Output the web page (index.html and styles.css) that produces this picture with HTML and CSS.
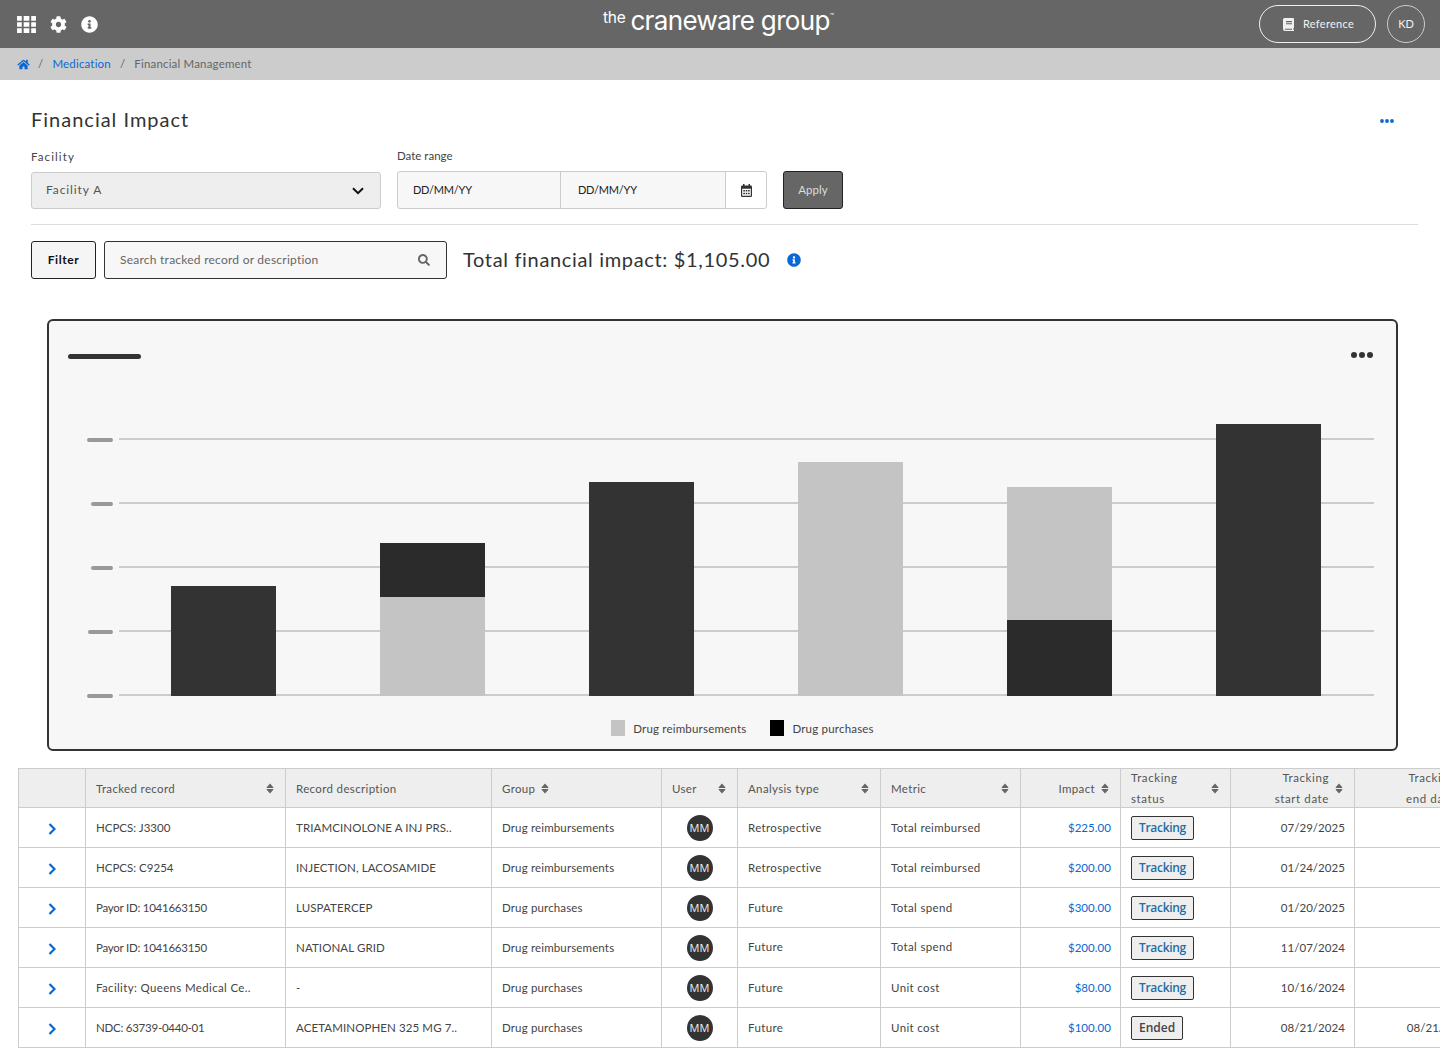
FILE: index.html
```html
<!DOCTYPE html>
<html lang="en">
<head>
<meta charset="utf-8">
<title>Financial Impact</title>
<link rel="stylesheet" href="styles.css">
</head>
<body>
<svg class="defs" width="0" height="0" aria-hidden="true">
  <symbol id="sort" viewBox="0 0 8 12"><path d="M4 0.5 7.6 4.6a.5.5 0 0 1-.4.8H.8a.5.5 0 0 1-.4-.8zM4 11.5.4 7.4a.5.5 0 0 1 .4-.8h6.4a.5.5 0 0 1 .4.8z"/></symbol>
  <symbol id="chev" viewBox="0 0 8 12"><path d="M1.5 1 6.5 6 1.5 11" fill="none" stroke="currentColor" stroke-width="2.2"/></symbol>
</svg>
<header class="topbar">
  <div class="top-left">
    <svg class="ico-apps" viewBox="0 0 20 18" aria-hidden="true"><path d="M0 0h5v5H0zM7 0h6v5H7zM15 0h5v5h-5zM0 6.500h5v5H0zM7 6.500h6v5H7zM15 6.500h5v5h-5zM0 13h5v5H0zM7 13h6v5H7zM15 13h5v5h-5z"/></svg>
    <svg class="ico-top" viewBox="0 0 512 512" aria-hidden="true"><path d="M487.400 315.700l-42.600-24.600c4.300-23.200 4.300-47 0-70.200l42.600-24.600c4.900-2.800 7.100-8.600 5.500-14-11.100-35.600-30-67.800-54.700-94.600-3.800-4.100-10-5.100-14.800-2.300L380.800 110c-17.900-15.400-38.500-27.300-60.800-35.100V25.800c0-5.600-3.900-10.500-9.400-11.700-36.700-8.200-74.300-7.800-109.200 0-5.500 1.200-9.400 6.100-9.400 11.700V75c-22.200 7.900-42.800 19.800-60.800 35.100L88.700 85.500c-4.900-2.800-11-1.900-14.800 2.300-24.700 26.700-43.600 58.900-54.700 94.600-1.700 5.400.6 11.200 5.500 14L67.300 221c-4.300 23.200-4.300 47 0 70.200l-42.600 24.600c-4.900 2.800-7.100 8.600-5.500 14 11.100 35.600 30 67.800 54.700 94.600 3.800 4.100 10 5.100 14.800 2.300l42.600-24.600c17.900 15.400 38.500 27.300 60.800 35.100v49.200c0 5.600 3.900 10.500 9.400 11.700 36.700 8.200 74.300 7.800 109.200 0 5.500-1.200 9.400-6.100 9.400-11.700v-49.200c22.200-7.900 42.800-19.800 60.800-35.100l42.600 24.600c4.900 2.800 11 1.900 14.800-2.300 24.700-26.700 43.600-58.900 54.700-94.600 1.500-5.500-.7-11.300-5.600-14.100zM256 336c-44.100 0-80-35.900-80-80s35.900-80 80-80 80 35.900 80 80-35.900 80-80 80z"/></svg>
    <svg class="ico-top" viewBox="0 0 512 512" aria-hidden="true"><path d="M256 8C119.043 8 8 119.083 8 256c0 136.997 111.043 248 248 248s248-111.003 248-248C504 119.083 392.957 8 256 8zm0 110c23.196 0 42 18.804 42 42s-18.804 42-42 42-42-18.804-42-42 18.804-42 42-42zm56 254c0 6.627-5.373 12-12 12h-88c-6.627 0-12-5.373-12-12v-24c0-6.627 5.373-12 12-12h12v-64h-12c-6.627 0-12-5.373-12-12v-24c0-6.627 5.373-12 12-12h64c6.627 0 12 5.373 12 12v100h12c6.627 0 12 5.373 12 12v24z"/></svg>
  </div>
  <div class="logo"><span class="logo-the">the</span><span class="logo-main">craneware group</span><span class="logo-tm">™</span></div>
  <div class="top-right">
    <div class="ref-btn">
      <svg class="ico-book" viewBox="0 0 11 13" aria-hidden="true"><path fill-rule="evenodd" d="M1.500 0H10a1 1 0 0 1 1 1v8.500a1 1 0 0 1-.6.800V11.500a.6.6 0 0 0 .6.600V13H2a2 2 0 0 1-2-2V1.500A1.500 1.500 0 0 1 1.500 0zM3 3v1.200h6V3zM3 5.200v1.100h6V5.200zM2 10.800a.9.900 0 0 0 0 1h7v-1z"/></svg>
      <span>Reference</span>
    </div>
    <div class="avatar-btn">KD</div>
  </div>
</header>
<nav class="crumbs">
  <svg class="ico-home" viewBox="0 0 576 512" aria-hidden="true"><path d="M280.370 148.260L96 300.110V464a16 16 0 0 0 16 16l112.060-.29a16 16 0 0 0 15.920-16V368a16 16 0 0 1 16-16h64a16 16 0 0 1 16 16v95.640a16 16 0 0 0 16 16.050L464 480a16 16 0 0 0 16-16V300L295.670 148.260a12.190 12.190 0 0 0-15.300 0zM571.600 251.470L488 182.560V44.050a12 12 0 0 0-12-12h-56a12 12 0 0 0-12 12v72.610L318.470 43a48 48 0 0 0-61 0L4.340 251.470a12 12 0 0 0-1.600 16.900l25.500 31A12 12 0 0 0 45.150 301l235.220-193.740a12.190 12.190 0 0 1 15.300 0L530.900 301a12 12 0 0 0 16.900-1.600l25.500-31a12 12 0 0 0-1.700-16.930z"/></svg>
  <span class="sep">/</span>
  <a class="crumb-link">Medication</a>
  <span class="sep">/</span>
  <span class="crumb-cur">Financial Management</span>
</nav>
<main class="content">
  <section class="head-block">
    <div class="title-row">
      <h1>Financial Impact</h1>
      <svg class="ico-more" viewBox="0 0 14 4" aria-hidden="true"><circle cx="2" cy="2" r="1.900"/><circle cx="7" cy="2" r="1.900"/><circle cx="12" cy="2" r="1.900"/></svg>
    </div>
    <div class="form-row">
      <div class="field">
        <label class="lbl">Facility</label>
        <div class="select">
          <span>Facility A</span>
          <svg class="ico-caret" viewBox="0 0 12 8" aria-hidden="true"><path d="M1 1.200 6 6.200 11 1.200" fill="none" stroke="currentColor" stroke-width="2"/></svg>
        </div>
      </div>
      <div class="field field-date">
        <label class="lbl">Date range</label>
        <div class="dates">
          <span class="date-a">DD/MM/YY</span>
          <span class="date-b">DD/MM/YY</span>
          <span class="date-ico">
            <svg class="ico-cal" viewBox="0 0 11 13" aria-hidden="true"><path fill-rule="evenodd" d="M2 0h1.500v1.500h4V0H9v1.500h.8A1.200 1.200 0 0 1 11 2.700v9.100a1.200 1.200 0 0 1-1.200 1.200H1.200A1.200 1.200 0 0 1 0 11.800V2.700a1.200 1.200 0 0 1 1.200-1.200H2zM1.200 4.800v7h8.600v-7zM2.300 6h1.600v1.400H2.300zM4.700 6h1.600v1.400H4.700zM7.100 6h1.600v1.400H7.100zM2.300 8.800h1.600v1.400H2.300zM4.700 8.800h1.600v1.400H4.700zM7.100 8.800h1.600v1.400H7.100z"/></svg>
          </span>
        </div>
      </div>
      <div class="apply">Apply</div>
    </div>
  </section>
  <section class="tools">
    <div class="filter-btn">Filter</div>
    <div class="search">
      <span>Search tracked record or description</span>
      <svg class="ico-search" viewBox="0 0 512 512" aria-hidden="true"><path d="M505 442.700L405.300 343c-4.500-4.500-10.600-7-17-7H372c27.600-35.300 44-79.700 44-128C416 93.100 322.900 0 208 0S0 93.100 0 208s93.100 208 208 208c48.300 0 92.700-16.400 128-44v16.300c0 6.400 2.500 12.500 7 17l99.700 99.700c9.400 9.400 24.600 9.400 33.900 0l28.300-28.300c9.400-9.400 9.400-24.600.1-34zM208 336c-70.700 0-128-57.200-128-128 0-70.700 57.200-128 128-128 70.700 0 128 57.200 128 128 0 70.700-57.200 128-128 128z"/></svg>
    </div>
    <div class="total">Total financial impact: $1,105.00</div>
    <svg class="ico-info" viewBox="0 0 512 512" aria-hidden="true"><path d="M256 8C119.043 8 8 119.083 8 256c0 136.997 111.043 248 248 248s248-111.003 248-248C504 119.083 392.957 8 256 8zm0 110c23.196 0 42 18.804 42 42s-18.804 42-42 42-42-18.804-42-42 18.804-42 42-42zm56 254c0 6.627-5.373 12-12 12h-88c-6.627 0-12-5.373-12-12v-24c0-6.627 5.373-12 12-12h12v-64h-12c-6.627 0-12-5.373-12-12v-24c0-6.627 5.373-12 12-12h64c6.627 0 12 5.373 12 12v100h12c6.627 0 12 5.373 12 12v24z"/></svg>
  </section>
  <section class="chart-card">
    <svg class="chart-svg" viewBox="0 0 1347 392" aria-hidden="true">
      <g class="c-grid">
        <rect x="70" y="117" width="1255" height="2"/>
        <rect x="70" y="181" width="1255" height="2"/>
        <rect x="70" y="245" width="1255" height="2"/>
        <rect x="70" y="309" width="1255" height="2"/>
        <rect x="70" y="373" width="1255" height="2"/>
      </g>
      <g class="c-tick">
        <rect x="38" y="117" width="26" height="4" rx="2"/>
        <rect x="42" y="181" width="22" height="4" rx="2"/>
        <rect x="42" y="245" width="22" height="4" rx="2"/>
        <rect x="39" y="309" width="25" height="4" rx="2"/>
        <rect x="38" y="373" width="26" height="4" rx="2"/>
      </g>
      <rect class="c-title" x="19" y="33" width="73" height="5" rx="2.500"/>
      <g class="c-title"><circle cx="1305" cy="34" r="3"/><circle cx="1313" cy="34" r="3"/><circle cx="1321" cy="34" r="3"/></g>
      <rect class="c-dark" x="122" y="265" width="105" height="110"/>
      <rect class="c-darker" x="331" y="222" width="105" height="54"/>
      <rect class="c-light" x="331" y="276" width="105" height="99"/>
      <rect class="c-dark" x="540" y="161" width="105" height="214"/>
      <rect class="c-light" x="749" y="141" width="105" height="234"/>
      <rect class="c-light" x="958" y="166" width="105" height="133"/>
      <rect class="c-darker" x="958" y="299" width="105" height="76"/>
      <rect class="c-dark" x="1167" y="103" width="105" height="272"/>
    </svg>
    <div class="legend">
      <span class="swatch swatch-light"></span><span class="leg-txt">Drug reimbursements</span>
      <span class="swatch swatch-dark"></span><span class="leg-txt">Drug purchases</span>
    </div>
  </section>
  <div class="table-wrap">
    <table class="grid">
      <colgroup>
        <col class="c1"><col class="c2"><col class="c3"><col class="c4"><col class="c5"><col class="c6"><col class="c7"><col class="c8"><col class="c9"><col class="c10"><col class="c11">
      </colgroup>
      <thead>
        <tr>
          <th></th>
          <th><div class="th-in between"><span>Tracked record</span><svg class="ico-sort"><use href="#sort"/></svg></div></th>
          <th><div class="th-in"><span>Record description</span></div></th>
          <th><div class="th-in"><span>Group</span><svg class="ico-sort"><use href="#sort"/></svg></div></th>
          <th><div class="th-in between"><span>User</span><svg class="ico-sort"><use href="#sort"/></svg></div></th>
          <th><div class="th-in between"><span>Analysis type</span><svg class="ico-sort"><use href="#sort"/></svg></div></th>
          <th><div class="th-in between"><span>Metric</span><svg class="ico-sort"><use href="#sort"/></svg></div></th>
          <th><div class="th-in right"><span>Impact</span><svg class="ico-sort"><use href="#sort"/></svg></div></th>
          <th><div class="th-in between"><span class="two">Tracking<br>status</span><svg class="ico-sort"><use href="#sort"/></svg></div></th>
          <th><div class="th-in right"><span class="two ta-r">Tracking<br>start date</span><svg class="ico-sort"><use href="#sort"/></svg></div></th>
          <th><div class="th-in right"><span class="two ta-r">Tracking<br>end date</span><svg class="ico-sort"><use href="#sort"/></svg></div></th>
        </tr>
      </thead>
      <tbody>
        <tr>
          <td class="exp"><svg class="ico-chev"><use href="#chev"/></svg></td>
          <td class="t0">HCPCS: J3300</td><td class="caps">TRIAMCINOLONE A INJ PRS..</td><td>Drug reimbursements</td>
          <td class="ctr"><span class="user">MM</span></td><td class="wide">Retrospective</td><td class="wide">Total reimbursed</td>
          <td class="num money">$225.00</td><td><span class="badge track">Tracking</span></td><td class="num">07/29/2025</td><td class="num"></td>
        </tr>
        <tr>
          <td class="exp"><svg class="ico-chev"><use href="#chev"/></svg></td>
          <td class="t0">HCPCS: C9254</td><td class="caps">INJECTION, LACOSAMIDE</td><td>Drug reimbursements</td>
          <td class="ctr"><span class="user">MM</span></td><td class="wide">Retrospective</td><td class="wide">Total reimbursed</td>
          <td class="num money">$200.00</td><td><span class="badge track">Tracking</span></td><td class="num">01/24/2025</td><td class="num"></td>
        </tr>
        <tr>
          <td class="exp"><svg class="ico-chev"><use href="#chev"/></svg></td>
          <td class="t1">Payor ID: 1041663150</td><td class="caps">LUSPATERCEP</td><td>Drug purchases</td>
          <td class="ctr"><span class="user">MM</span></td><td class="wide">Future</td><td class="wide">Total spend</td>
          <td class="num money">$300.00</td><td><span class="badge track">Tracking</span></td><td class="num">01/20/2025</td><td class="num"></td>
        </tr>
        <tr>
          <td class="exp"><svg class="ico-chev"><use href="#chev"/></svg></td>
          <td class="t1">Payor ID: 1041663150</td><td class="caps">NATIONAL GRID</td><td>Drug reimbursements</td>
          <td class="ctr"><span class="user">MM</span></td><td class="wide nudge">Future</td><td class="wide nudge">Total spend</td>
          <td class="num money">$200.00</td><td><span class="badge track">Tracking</span></td><td class="num">11/07/2024</td><td class="num"></td>
        </tr>
        <tr>
          <td class="exp"><svg class="ico-chev"><use href="#chev"/></svg></td>
          <td class="wide">Facility: Queens Medical Ce..</td><td>-</td><td>Drug purchases</td>
          <td class="ctr"><span class="user">MM</span></td><td class="wide">Future</td><td class="wide">Unit cost</td>
          <td class="num money">$80.00</td><td><span class="badge track">Tracking</span></td><td class="num">10/16/2024</td><td class="num"></td>
        </tr>
        <tr>
          <td class="exp"><svg class="ico-chev"><use href="#chev"/></svg></td>
          <td class="t1">NDC: 63739-0440-01</td><td class="caps">ACETAMINOPHEN 325 MG 7..</td><td>Drug purchases</td>
          <td class="ctr"><span class="user">MM</span></td><td class="wide">Future</td><td class="wide">Unit cost</td>
          <td class="num money">$100.00</td><td><span class="badge ended">Ended</span></td><td class="num">08/21/2024</td><td class="num">08/21/2025</td>
        </tr>
      </tbody>
    </table>
  </div>
</main>
</body>
</html>
```

FILE: styles.css
```css
* { box-sizing: border-box; }
html, body { margin: 0; padding: 0; }
body {
  width: 1440px;
  height: 1063px;
  overflow: hidden;
  background: #fff;
  color: #333;
  font-family: "Lato", "Liberation Sans", sans-serif;
  font-size: 12px;
}
.defs { display: block; height: 0; }

.topbar {
  height: 48px;
  background: #666;
  display: flex;
  align-items: center;
  justify-content: space-between;
  padding: 0 15px 0 17px;
  position: relative;
  color: #fff;
}
.top-left { display: flex; align-items: center; gap: 14px; }
.ico-apps { width: 19px; height: 17px; fill: #fff; }
.ico-top { width: 17px; height: 17px; fill: #fff; }
.logo {
  position: absolute;
  left: 603px;
  top: 5px;
  display: flex;
  align-items: flex-start;
  color: #fff;
  white-space: nowrap;
}
.logo-the { font: 400 15.500px/20px "Inter", sans-serif; letter-spacing: -0.300px; margin: 3px 5px 0 0; }
.logo-main { font: 400 26px/32px "Inter", sans-serif; letter-spacing: -0.650px; }
.logo-tm { font: 400 7px/8px "Inter", sans-serif; margin-top: 8px; }
.top-right { display: flex; align-items: center; gap: 11px; }
.ref-btn {
  width: 117px;
  height: 38px;
  border: 1.500px solid #f0f0f0;
  border-radius: 19px;
  display: flex;
  align-items: center;
  justify-content: center;
  gap: 9px;
  padding: 0 0 2px 2px;
  font-size: 11px;
  letter-spacing: 0.300px;
  color: #f2f2f2;
}
.ico-book { width: 11px; height: 13px; fill: #f0f0f0; margin-top: 2px; }
.avatar-btn {
  width: 38px;
  height: 38px;
  border: 1.500px solid #ccc;
  border-radius: 50%;
  display: flex;
  align-items: center;
  justify-content: center;
  padding-bottom: 2px;
  font-size: 11px;
  color: #f2f2f2;
}

.crumbs {
  height: 32px;
  background: #ccc;
  display: flex;
  align-items: center;
  padding: 0 0 2px 17px;
  font-size: 11.500px;
  letter-spacing: 0.180px;
}
.ico-home { width: 13px; height: 11px; fill: #0a68d4; margin: 2px 8px 0 0; }
.sep { color: #666; margin-right: 9px; }
.crumb-link { color: #0a68d4; margin-right: 9px; }
.crumb-cur { color: #666; }

.content { padding-top: 24px; }
.head-block {
  margin: 0 22px 0 31px;
  padding-bottom: 15px;
  border-bottom: 1px solid #ddd;
}
.title-row { display: flex; justify-content: space-between; align-items: center; height: 32px; padding-right: 24px; }
h1 { margin: 0 0 2px; font-size: 20px; font-weight: 400; line-height: 30px; letter-spacing: 1px; color: #333; }
.ico-more { width: 14px; height: 4px; fill: #0a68d4; margin-top: 2px; }
.form-row { display: flex; align-items: flex-end; margin-top: 13px; }
.field { display: flex; flex-direction: column; }
.lbl { font-size: 11.500px; letter-spacing: 1.100px; line-height: 14px; color: #444; margin-bottom: 8px; }
.select {
  width: 350px;
  height: 37px;
  background: #eee;
  border: 1px solid #ccc;
  border-radius: 3px;
  display: flex;
  align-items: center;
  justify-content: space-between;
  padding: 0 16px 2px 14px;
  font-size: 12px;
  letter-spacing: 0.900px;
  color: #555;
}
.ico-caret { width: 12px; height: 8px; color: #111; margin-top: 2px; }
.field-date { margin-left: 16px; }
.field-date .lbl { letter-spacing: 0; }
.dates {
  width: 370px;
  height: 38px;
  display: flex;
  border: 1px solid #ccc;
  border-radius: 3px;
  background: #f7f7f7;
  font-size: 11px;
  letter-spacing: -0.250px;
  color: #222;
}
.date-a, .date-b { display: flex; align-items: center; padding-bottom: 2px; }
.date-a { width: 163px; padding-left: 15px; border-right: 1px solid #ccc; }
.date-b { width: 165px; padding-left: 17px; border-right: 1px solid #ccc; }
.date-ico { flex: 1; display: flex; align-items: center; justify-content: center; background: #fff; border-radius: 0 3px 3px 0; }
.ico-cal { width: 11px; height: 13px; fill: #333; }
.apply {
  margin-left: 16px;
  width: 60px;
  height: 38px;
  background: #666;
  border: 1px solid #222;
  border-radius: 3px;
  display: flex;
  align-items: center;
  justify-content: center;
  padding-bottom: 2px;
  color: #ddd;
  font-size: 11.500px;
  letter-spacing: 0;
}

.tools { display: flex; align-items: center; margin: 16px 0 0 31px; }
.filter-btn {
  width: 65px;
  height: 38px;
  background: #f5f5f5;
  border: 1px solid #222;
  border-radius: 3px;
  display: flex;
  align-items: center;
  justify-content: center;
  padding-bottom: 2px;
  color: #111;
  font-size: 12px;
  font-weight: 700;
  letter-spacing: 0.600px;
}
.search {
  width: 343px;
  height: 38px;
  margin-left: 8px;
  background: #f7f7f7;
  border: 1px solid #333;
  border-radius: 3px;
  display: flex;
  align-items: center;
  justify-content: space-between;
  padding: 0 16px 2px 15px;
  font-size: 12px;
  letter-spacing: 0.240px;
  color: #666;
}
.ico-search { width: 12px; height: 12px; fill: #666; margin-top: 2px; }
.total { margin-left: 16px; font-size: 20px; line-height: 36px; height: 38px; letter-spacing: 0.660px; color: #333; white-space: nowrap; }
.ico-info { width: 14px; height: 14px; margin-left: 17px; fill: #0a68d4; }

.chart-card {
  margin: 40px 0 0 47px;
  width: 1351px;
  height: 432px;
  background: #f7f7f7;
  border: 2px solid #333;
  border-radius: 6px;
  display: flex;
  flex-direction: column;
}
.chart-svg { width: 1347px; height: 392px; display: block; }
.c-grid { fill: #ccc; }
.c-tick { fill: #999; }
.c-title { fill: #333; }
.c-dark { fill: #333; }
.c-darker { fill: #2b2b2b; }
.c-light { fill: #c4c4c4; }
.legend { display: flex; align-items: center; justify-content: center; height: 24px; margin-top: 3px; padding-left: 40px; font-size: 11.500px; letter-spacing: 0.200px; color: #444; }
.swatch { width: 14px; height: 16px; margin-right: 8px; }
.swatch-light { background: #c4c4c4; }
.swatch-dark { background: #000; }
.leg-txt { margin-right: 24px; }
.leg-txt:last-child { margin-right: 0; }

.table-wrap { margin: 17px 0 0 18px; overflow: hidden; width: 1422px; }
.grid { border-collapse: collapse; table-layout: fixed; width: 1462px; }
.c1 { width: 67px; } .c2 { width: 200px; } .c3 { width: 206px; } .c4 { width: 170px; }
.c5 { width: 76px; } .c6 { width: 143px; } .c7 { width: 140px; } .c8 { width: 100px; }
.c9 { width: 110px; } .c10 { width: 124px; } .c11 { width: 126px; }
.grid th, .grid td { border: 1px solid #ccc; padding: 0 10px; white-space: nowrap; font-weight: 400; text-align: left; }
.grid th { height: 39px; padding-right: 11px; background: #eee; color: #555; font-size: 11.500px; letter-spacing: 0.350px; line-height: 21px; }
.grid td { height: 40px; color: #444; font-size: 11.500px; letter-spacing: 0.150px; }
.th-in { display: flex; align-items: center; gap: 6px; height: 38px; }
.two { letter-spacing: 0.600px; }
.between { justify-content: space-between; }
.right { justify-content: flex-end; }
.ta-r { text-align: right; }
.ico-sort { width: 8px; height: 11px; fill: #666; flex: none; }
.exp { text-align: center !important; padding: 0 !important; }
.ico-chev { width: 8px; height: 12px; color: #0a68d4; display: inline-block; vertical-align: middle; }
.ctr { text-align: center !important; padding: 0 !important; }
.grid td.t0 { letter-spacing: 0; }
.grid td.t1 { letter-spacing: -0.250px; }
.grid td.caps { letter-spacing: 0.100px; }
.grid td.wide { letter-spacing: 0.350px; }
.grid td.nudge { padding-bottom: 2px; }
.user {
  display: inline-flex;
  width: 26px;
  height: 26px;
  border-radius: 50%;
  background: #333;
  color: #eee;
  align-items: center;
  justify-content: center;
  font-family: "Open Sans", sans-serif;
  font-size: 11px;
  letter-spacing: 0;
  vertical-align: middle;
}
.grid td.num { text-align: right; padding-right: 9px; letter-spacing: 0.050px; }
.grid td.money { color: #0a68d4; }
.badge {
  display: inline-flex;
  align-items: center;
  height: 24px;
  padding: 0 7px;
  background: #eee;
  border: 1px solid #333;
  border-radius: 2px;
  font-family: "Open Sans", sans-serif;
  font-weight: 600;
  font-size: 12px;
  letter-spacing: 0;
  vertical-align: middle;
}
.track { color: #1b6fa8; letter-spacing: -0.300px; }
.ended { color: #444; }
```
